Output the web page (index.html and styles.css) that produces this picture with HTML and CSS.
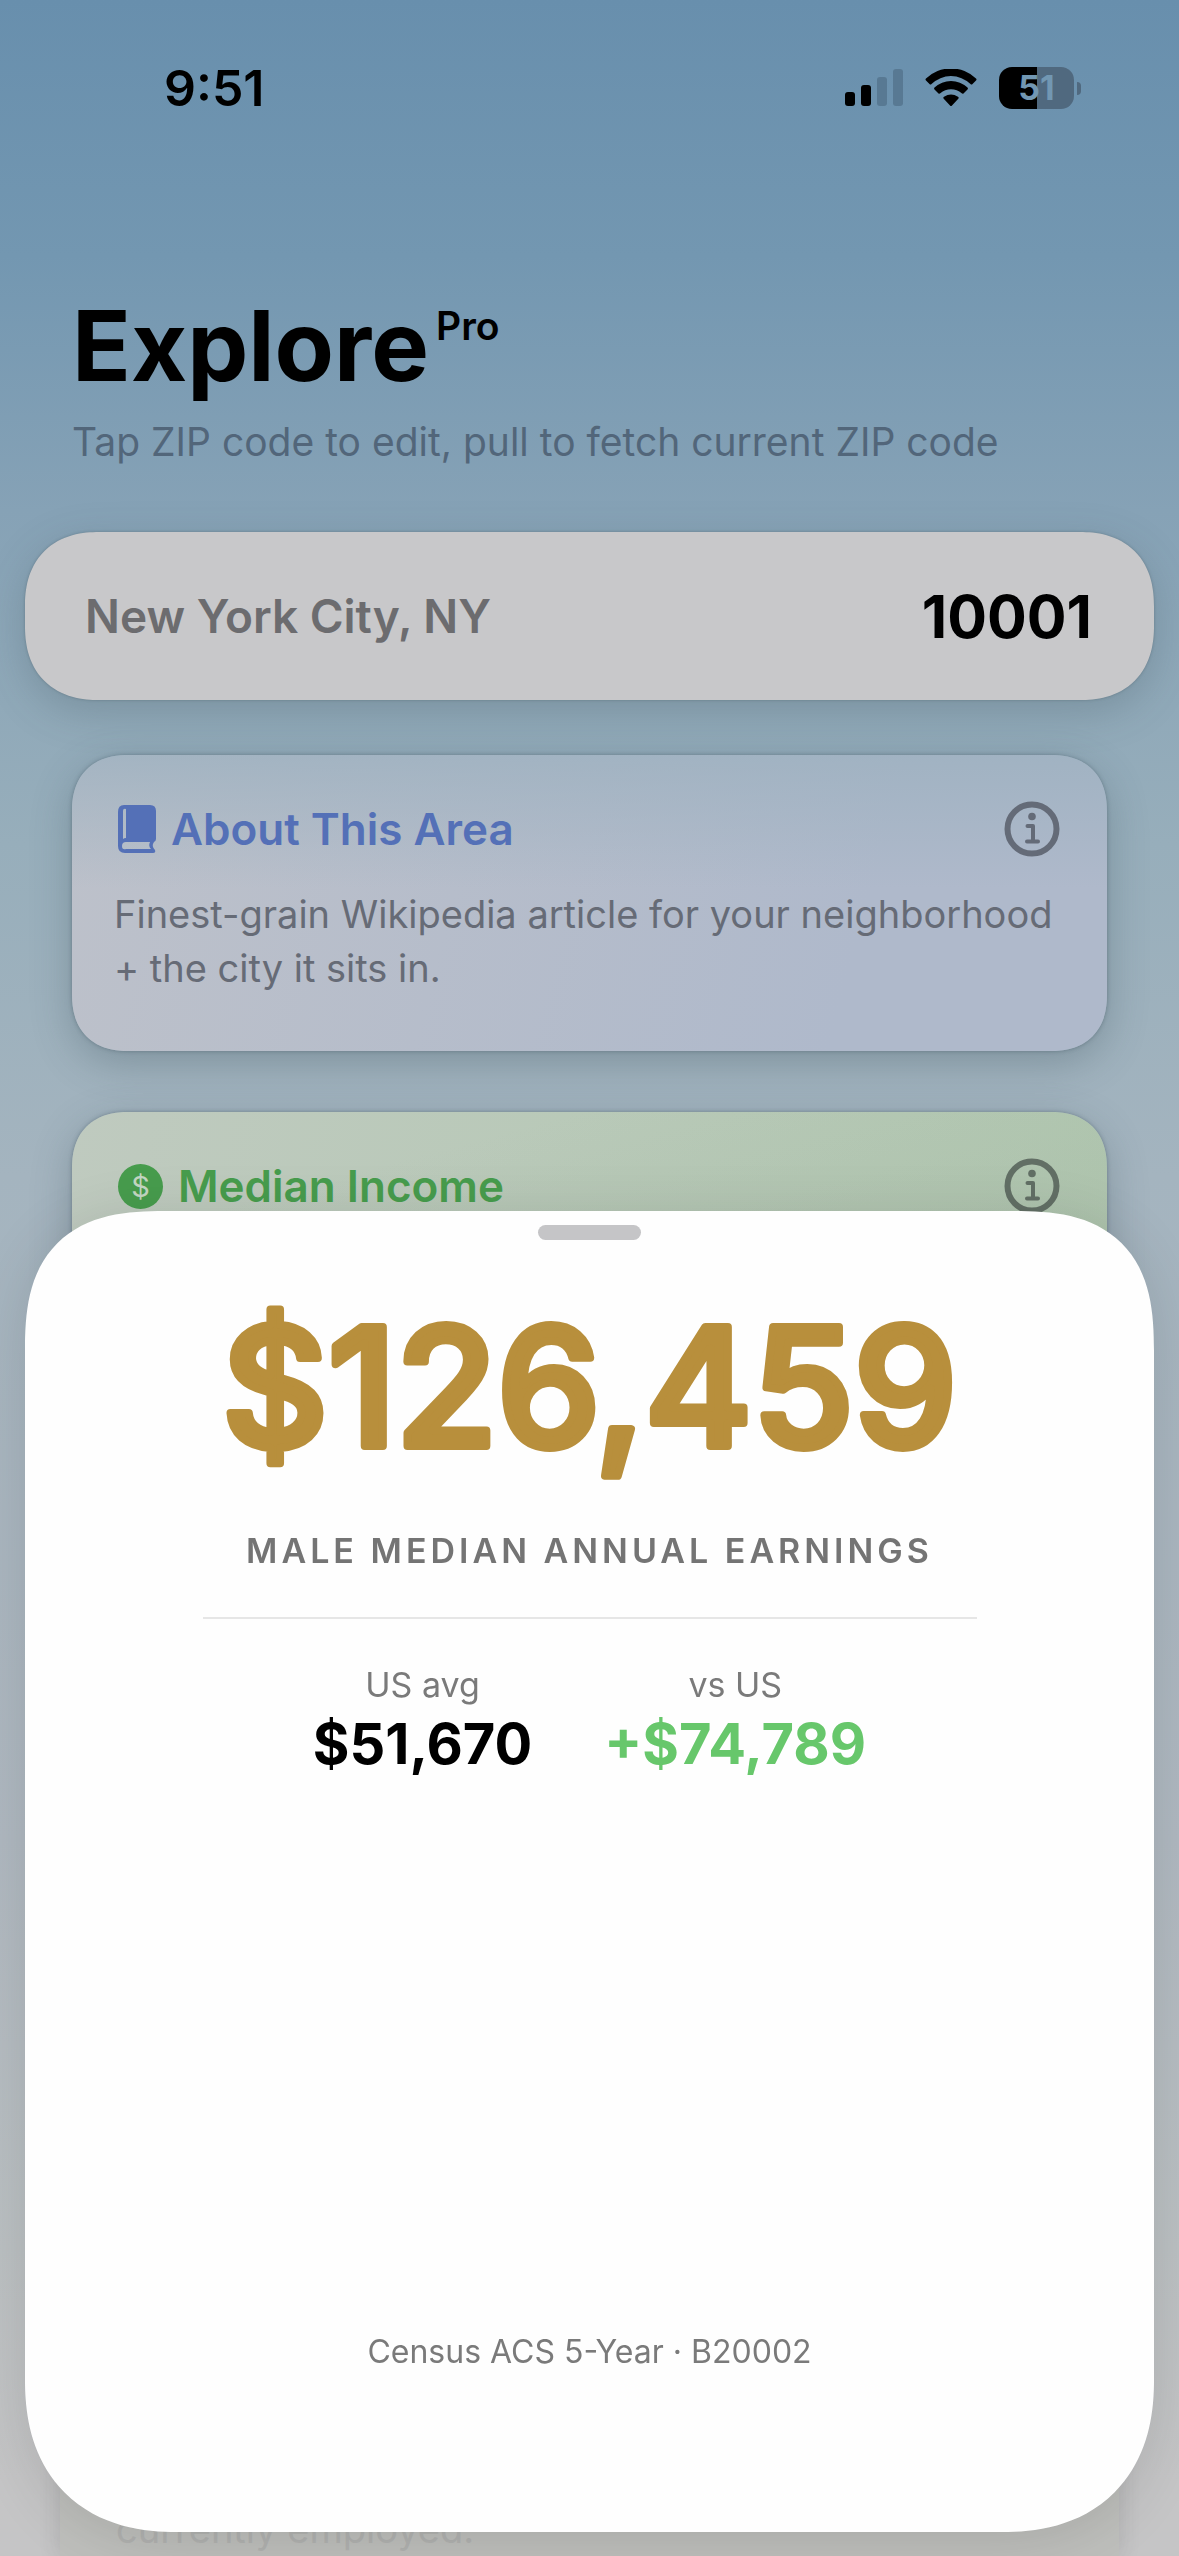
FILE: index.html
```html
<!DOCTYPE html>
<html lang="en">
<head>
<meta charset="utf-8">
<meta name="viewport" content="width=device-width, initial-scale=1">
<title>Explore Pro</title>
<link rel="stylesheet" href="styles.css">
</head>
<body>
<div class="screen">
  <div class="status">
    <time class="clock">9:51</time>
    <div class="indicators">
      <svg class="signal" viewBox="0 0 58 38" aria-hidden="true">
        <rect x="0" y="23" width="10" height="14" rx="3"/>
        <rect x="16" y="16" width="10" height="21" rx="3"/>
        <rect class="dim" x="32" y="8" width="10" height="29" rx="3"/>
        <rect class="dim" x="48" y="0" width="10" height="37" rx="3"/>
      </svg>
      <svg class="wifi" viewBox="0 0 52 38" aria-hidden="true">
        <path d="M1 11.500Q0 10.500 1 9.500A36 36 0 0 1 51 9.500Q52 10.500 51 11.500L47.500 15Q46.500 16 45.500 15A28 28 0 0 0 6.500 15Q5.500 16 4.500 15Z"/>
        <path d="M9.500 20.500Q8.500 19.500 9.500 18.500A24 24 0 0 1 42.500 18.500Q43.500 19.500 42.500 20.500L38.500 24.500Q37.500 25 36.700 24.300A16 16 0 0 0 15.300 24.300Q14.500 25 13.500 24.500Z"/>
        <path d="M18.500 29.500Q17.800 28.500 19 27.800A13 13 0 0 1 33 27.800Q34.200 28.500 33.500 29.500L27 36.500Q26 37.500 25 36.500Z"/>
      </svg>
      <div class="battery"><span class="cell">51</span><span class="nub"></span></div>
    </div>
  </div>

  <header class="heading">
    <h1>Explore<sup>Pro</sup></h1>
    <p>Tap ZIP code to edit, pull to fetch current ZIP code</p>
  </header>

  <div class="place">
    <label for="zip">New York City, NY</label>
    <input id="zip" type="text" inputmode="numeric" value="10001">
  </div>

  <main class="cards">
    <section class="card about">
      <div class="card-head">
        <h2>
          <svg class="book" viewBox="0 0 38 48" aria-hidden="true">
            <path fill-rule="evenodd" d="M6 0H32Q38 0 38 6V34Q38 36 36 37Q33 41 37 45Q38 48 35 48H7Q0 48 0 41V7Q0 0 6 0ZM5 6V34Q6 33 8 33V4Q5 3 5 6ZM8 37Q4 37 4 41T8 44H33Q30 41 32 37Z"/>
          </svg>
          <span>About This Area</span>
        </h2>
        <button class="info" type="button" aria-label="About this area details">
          <svg viewBox="0 0 56 56" aria-hidden="true"><circle class="ring" cx="28" cy="28" r="24.500"/><circle cx="28" cy="15.500" r="3.800"/><path class="stroke" d="M23.500 25H29V40M23 40.500H34"/></svg>
        </button>
      </div>
      <p>Finest-grain Wikipedia article for your neighborhood + the city it sits in.</p>
    </section>

    <section class="card income">
      <div class="card-head">
        <h2><span class="coin" aria-hidden="true">$</span><span>Median Income</span></h2>
        <button class="info" type="button" aria-label="Median income details">
          <svg viewBox="0 0 56 56" aria-hidden="true"><circle class="ring" cx="28" cy="28" r="24.500"/><circle cx="28" cy="15.500" r="3.800"/><path class="stroke" d="M23.500 25H29V40M23 40.500H34"/></svg>
        </button>
      </div>
    </section>

    <section class="employed"><p>currently employed.</p></section>
  </main>
</div>

<section class="sheet" role="dialog" aria-label="Male median annual earnings">
  <button class="grabber" type="button" aria-label="Dismiss"></button>
  <svg class="figure" role="img" aria-label="$126,459"><text x="50%" y="136">$126,459</text></svg>
  <h2 class="caption">MALE MEDIAN ANNUAL EARNINGS</h2>
  <hr>
  <dl class="compare">
    <div><dt>US avg</dt><dd>$51,670</dd></div>
    <div><dt>vs US</dt><dd class="up">+$74,789</dd></div>
  </dl>
  <footer>Census ACS 5-Year · B20002</footer>
</section>
</body>
</html>
```

FILE: styles.css
```css
* { box-sizing: border-box; }

body {
  margin: 0;
  font-family: Inter, "Liberation Sans", sans-serif;
  color: #000;
}

h1, h2, p, dl, dd { margin: 0; }

button {
  padding: 0;
  border: 0;
  background: none;
}

.screen {
  display: flex;
  flex-direction: column;
  height: 100vh;
  overflow: hidden;
  background: linear-gradient(#688fad 0, #7397b1 10%, #86a2b6 20%, #97aebb 33%, #a4b4bf 46%, #b0b9c1 72%, #bcc1c3 88%, #c5c5c6 97%);
}

/* Status bar */
.status {
  display: flex;
  justify-content: space-between;
  align-items: center;
  height: 176px;
  padding: 0 98px 0 164px;
}

.clock {
  font-size: 50px;
  font-weight: 600;
}

.indicators {
  display: flex;
  align-items: center;
  gap: 22px;
}

.signal { width: 58px; height: 38px; }
.wifi { width: 52px; height: 38px; }
.dim { fill: #587993; }

.battery {
  display: flex;
  align-items: center;
  gap: 3px;
}

.cell {
  width: 75px;
  height: 42px;
  border-radius: 13px;
  background: linear-gradient(90deg, #000 51%, #50697f 51%);
  color: #7297b2;
  font-size: 34px;
  font-weight: 700;
  line-height: 42px;
  text-align: center;
}

.nub {
  width: 4px;
  height: 13px;
  border-radius: 0 6px 6px 0;
  background: #50697f;
}

/* Heading */
.heading { padding: 110px 72px 0; }

h1 {
  display: flex;
  align-items: flex-start;
  gap: 7px;
  font-size: 97px;
  font-weight: 700;
  line-height: 120px;
}

h1 sup {
  padding-top: 17px;
  font-size: 39px;
  font-weight: 600;
  line-height: 46px;
}

.heading p {
  margin-top: 12px;
  color: #52667a;
  font-size: 39px;
  line-height: 48px;
}

/* Place and ZIP */
.place {
  display: flex;
  justify-content: space-between;
  align-items: center;
  height: 168px;
  margin: 66px 25px 0;
  padding: 0 62px 0 60px;
  border-radius: 68px;
  background: #c8c8ca;
  box-shadow: 0 12px 40px rgb(60 80 90 / 26%), 0 0 3px rgb(60 80 90 / 40%);
}

.place label {
  color: #6c6c6f;
  font-size: 46px;
  font-weight: 600;
}

.place input {
  width: 260px;
  padding: 0;
  border: 0;
  background: none;
  color: #000;
  font: 700 59px Inter, "Liberation Sans", sans-serif;
  text-align: right;
}

/* Cards */
.cards {
  display: flex;
  flex: 1;
  flex-direction: column;
  gap: 61px;
  margin: 55px 72px 0;
}

.card {
  padding: 46px 42px 54px;
  border-radius: 50px;
  box-shadow: 0 12px 40px rgb(60 80 90 / 32%), 0 0 4px rgb(60 80 90 / 45%);
}

.about { background: linear-gradient(rgb(157 177 192 / 80%), rgb(157 177 192 / 0%) 45%), linear-gradient(105deg, #bdc1ca, #afb9cb 75%); }
.income { background: linear-gradient(165deg, rgb(160 180 160 / 0%) 20%, rgb(160 180 160 / 60%)), linear-gradient(105deg, #bfcabf, #b1c8b0); }

.card-head {
  display: flex;
  justify-content: space-between;
  align-items: center;
  height: 56px;
  padding: 0 5px 0 4px;
}

.card h2 {
  display: flex;
  align-items: center;
  gap: 15px;
  font-size: 44px;
  font-weight: 600;
}

.about h2 { color: #5470b7; }
.income h2 { color: #479c4d; }

.book {
  width: 38px;
  height: 48px;
  fill: currentColor;
}

.coin {
  width: 45px;
  height: 45px;
  border-radius: 50%;
  background: currentColor;
  font-size: 29px;
  font-weight: 400;
  line-height: 45px;
  text-align: center;
}

.coin::first-letter { color: #c3d6c2; }

.info { color: #646b78; }
.income .info { color: #626f65; }

.info svg {
  display: block;
  width: 56px;
  height: 56px;
  fill: currentColor;
}

.ring, .stroke {
  fill: none;
  stroke: currentColor;
  stroke-width: 6;
}

.stroke {
  stroke-width: 4;
  stroke-linecap: round;
  stroke-linejoin: round;
}

.card p {
  margin-top: 30px;
  color: #666b76;
  font-size: 38px;
  line-height: 54px;
}

.about { padding-bottom: 56px; }
.income { height: 400px; }

.employed {
  margin: auto -12px 0;
  padding: 120px 56px 0;
  background: #bebfbc;
  box-shadow: 0 0 20px rgb(60 60 60 / 16%);
}

.employed p {
  color: #b1b2b0;
  font-size: 38px;
  line-height: 54px;
}

/* Detail sheet laid over the page */
.sheet {
  position: fixed;
  inset: 1211px 25px 24px;
  display: flex;
  flex-direction: column;
  align-items: center;
  padding: 14px 60px 160px;
  border-radius: 112px 112px 132px 132px;
  background: #fefefe;
  box-shadow: 0 8px 60px rgb(0 0 0 / 12%);
}

/* Continuous corners where the browser has them */
@supports (corner-shape: superellipse(1.2)) {
  .sheet {
    border-radius: 140px 140px 152px 152px;
    corner-shape: superellipse(1.4) superellipse(1.4) superellipse(1.2) superellipse(1.2);
  }
  .place { border-radius: 74px; corner-shape: superellipse(1.2); }
  .card { border-radius: 56px; corner-shape: superellipse(1.2); }
}

.grabber {
  width: 103px;
  height: 15px;
  border-radius: 8px;
  background: #c5c5c7;
}

.figure {
  width: 100%;
  height: 210px;
  margin-top: 70px;
  overflow: visible;
  fill: #b88f3c;
  stroke: #b88f3c;
  stroke-width: 8;
  stroke-linejoin: round;
}

.figure text {
  font-size: 164px;
  font-weight: 500;
  text-anchor: middle;
}

.caption {
  margin-top: 7px;
  color: #747474;
  font-size: 34px;
  font-weight: 600;
  line-height: 48px;
  letter-spacing: 4px;
}

hr {
  width: 774px;
  max-width: 100%;
  height: 2px;
  margin: 42px 0;
  border: 0;
  background: #e6e6e6;
}

.compare {
  display: flex;
  gap: 72px;
  text-align: center;
}

.compare dt {
  color: #7a7a7a;
  font-size: 34px;
  line-height: 48px;
}

.compare dd {
  font-size: 56px;
  font-weight: 700;
  line-height: 70px;
}

.compare .up { color: #67c76b; }

footer {
  margin-top: auto;
  color: #7a7a7a;
  font-size: 32px;
  line-height: 40px;
}
```
